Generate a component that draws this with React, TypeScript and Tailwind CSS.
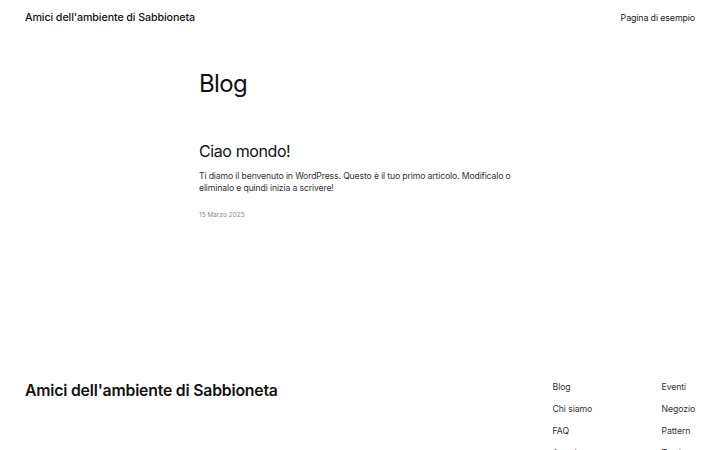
import React from "react";

const footerCols = [
  ["Blog", "Chi siamo", "FAQ", "Autori"],
  ["Eventi", "Negozio", "Pattern", "Temi"],
];

export default function App() {
  return (
    <div
      className="min-h-[560px] bg-white text-[#111]"
      style={{ fontFamily: "Inter, 'Noto Sans', sans-serif" }}
    >
      <header className="flex items-center justify-between px-[25px] h-[35px] pt-[1px]">
        <a className="text-[10.7px] font-medium tracking-[-0.1px]">
          Amici dell'ambiente di Sabbioneta
        </a>
        <nav className="text-[8.8px] tracking-[-0.1px] text-[#222]">Pagina di esempio</nav>
      </header>

      <main className="mx-auto w-[322px] pt-[34px]">
        <h1 className="text-[24px] font-normal leading-[30px] tracking-[-0.6px]">Blog</h1>

        <article className="mt-[42px]">
          <h2 className="text-[16px] leading-[20px] tracking-[-0.4px]">Ciao mondo!</h2>
          <p className="mt-[9px] text-[8.7px] leading-[12px] tracking-[-0.15px] text-[#333]">
            Ti diamo il benvenuto in WordPress. Questo è il tuo primo articolo. Modificalo o
            eliminalo e quindi inizia a scrivere!
          </p>
          <div className="mt-[16px] text-[6.5px] leading-[10px] text-[#888]">15 Marzo 2025</div>
        </article>
      </main>

      <footer className="mt-[161px] flex justify-between px-[25px]">
        <div className="text-[15.8px] leading-[20px] font-semibold tracking-[-0.2px]">
          Amici dell'ambiente di Sabbioneta
        </div>
        <div className="flex">
          {footerCols.map((col, i) => (
            <ul key={i} className={`flex flex-col gap-[9px] ${i === 0 ? "w-[109px]" : ""}`}>
              {col.map((l) => (
                <li key={l} className="text-[8.7px] leading-[13px] tracking-[-0.1px] text-[#333]">
                  {l}
                </li>
              ))}
            </ul>
          ))}
        </div>
      </footer>
    </div>
  );
}
